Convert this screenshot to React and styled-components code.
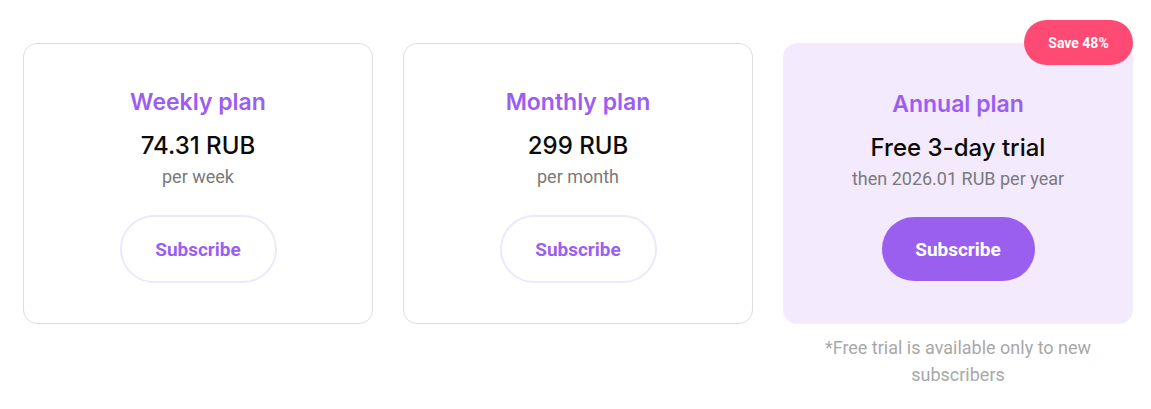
import React from "react";
import styled, { createGlobalStyle } from "styled-components";

const GlobalStyle = createGlobalStyle`
  body {
    margin: 0;
    background: #ffffff;
    font-family: "Roboto", "Liberation Sans", sans-serif;
  }
`;

const Plans = styled.div`
  display: flex;
  align-items: flex-start;
  gap: 30px;
  padding: 43px 0 0 23px;
`;

const Column = styled.div`
  display: flex;
  flex-direction: column;
  align-items: center;
`;

const Card = styled.div`
  position: relative;
  box-sizing: border-box;
  width: 350px;
  height: 281px;
  display: flex;
  flex-direction: column;
  align-items: center;
  padding-top: ${props => (props.featured ? "46px" : "44px")};
  border-radius: 14px;
  border: 1px solid ${props => (props.featured ? "#f3eafd" : "#dedede")};
  background: ${props => (props.featured ? "#f3eafd" : "#ffffff")};
`;

const Badge = styled.span`
  position: absolute;
  top: -24px;
  right: -1px;
  width: 109px;
  height: 45px;
  display: flex;
  align-items: center;
  justify-content: center;
  border-radius: 23px;
  background: #ff4a74;
  color: #ffffff;
  font-size: 14px;
  font-weight: 700;
`;

const Title = styled.h2`
  margin: 0;
  font-family: "Inter", "Noto Sans", sans-serif;
  font-size: 23px;
  line-height: 28px;
  font-weight: 600;
  color: #9b5ef0;
`;

const Price = styled.div`
  margin-top: 16px;
  font-family: "Inter", "Noto Sans", sans-serif;
  font-size: 24px;
  line-height: 28px;
  font-weight: 500;
  color: #0b0b0b;
`;

const Period = styled.div`
  margin-top: 6px;
  font-size: 18px;
  line-height: 22px;
  color: #7a7a7a;
`;

const Button = styled.button`
  margin-top: 27px;
  box-sizing: border-box;
  height: ${props => (props.filled ? "64px" : "68px")};
  width: ${props => (props.filled ? "153px" : "157px")};
  border-radius: 34px;
  border: ${props => (props.filled ? "none" : "2px solid #efe7fd")};
  background: ${props => (props.filled ? "#9b5ff0" : "#ffffff")};
  color: ${props => (props.filled ? "#ffffff" : "#9b5ff0")};
  font-family: "Roboto", "Liberation Sans", sans-serif;
  font-size: 19px;
  font-weight: 700;
  cursor: pointer;
`;

const Note = styled.p`
  margin: 10px 0 0;
  max-width: 300px;
  text-align: center;
  font-size: 18px;
  line-height: 27px;
  color: #a8a8a8;
`;

const plans = [
  { title: "Weekly plan", price: "74.31 RUB", period: "per week" },
  { title: "Monthly plan", price: "299 RUB", period: "per month" },
];

const App = () => {
  return (
    <>
      <GlobalStyle />
      <Plans>
        {plans.map(plan => (
          <Column key={plan.title}>
            <Card>
              <Title>{plan.title}</Title>
              <Price>{plan.price}</Price>
              <Period>{plan.period}</Period>
              <Button>Subscribe</Button>
            </Card>
          </Column>
        ))}
        <Column>
          <Card featured>
            <Badge>Save 48%</Badge>
            <Title>Annual plan</Title>
            <Price>Free 3-day trial</Price>
            <Period>then 2026.01 RUB per year</Period>
            <Button filled>Subscribe</Button>
          </Card>
          <Note>*Free trial is available only to new subscribers</Note>
        </Column>
      </Plans>
    </>
  );
};

export default App;
